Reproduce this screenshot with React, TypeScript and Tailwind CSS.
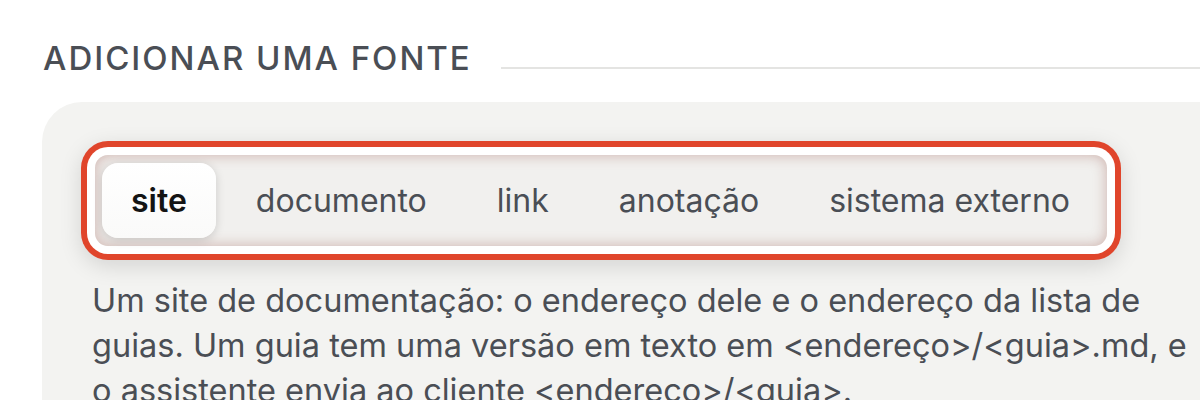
import React from "react";

const tabs = ["site", "documento", "link", "anotação", "sistema externo"];

export default function App() {
  return (
    <div
      className="w-[1200px] h-[400px] overflow-hidden bg-white"
      style={{ fontFamily: "Inter, 'Noto Sans', sans-serif" }}
    >
      <div className="flex items-end gap-[29px] pl-[43px] pt-[42px]">
        <h2 className="text-[33px] leading-[33px] font-medium tracking-[0.06em] text-[#4a4e55] whitespace-nowrap">
          ADICIONAR UMA FONTE
        </h2>
        <div className="flex-1 h-[2px] bg-[#e4e4e2] mb-[6px]" />
      </div>

      <div className="ml-[42px] mt-[27px] h-[400px] rounded-tl-[40px] bg-[#f3f3f1] pl-[53px] pt-[53px]">
        <div className="flex w-fit gap-[10px] rounded-[13px] bg-[#f1f0ee] px-[7px] py-[8px] shadow-[0_0_0_8px_#ffffff,0_0_0_14px_#e0452b,0_6px_22px_14px_rgba(0,0,0,0.13),inset_0_0_14px_rgba(150,80,70,0.4)]">
          {tabs.map((t, i) => (
            <div
              key={t}
              className={
                i === 0
                  ? "flex h-[75px] items-center rounded-[16px] bg-gradient-to-b from-white to-[#fafaf9] px-[29px] text-[32px] font-semibold text-[#141414] shadow-[0_2px_10px_rgba(0,0,0,0.16)]"
                  : "flex h-[75px] items-center px-[30px] text-[32px] text-[#4a4e55]"
              }
            >
              {t}
            </div>
          ))}
        </div>

        <p className="-ml-[3px] mt-[32px] w-[1095px] text-[32.5px] leading-[45px] text-[#4a4e55]">
          Um site de documentação: o endereço dele e o endereço da lista de guias. Um guia tem uma
          versão em texto em &lt;endereço&gt;/&lt;guia&gt;.md, e o assistente envia ao cliente
          &lt;endereço&gt;/&lt;guia&gt;.
        </p>
      </div>
    </div>
  );
}
